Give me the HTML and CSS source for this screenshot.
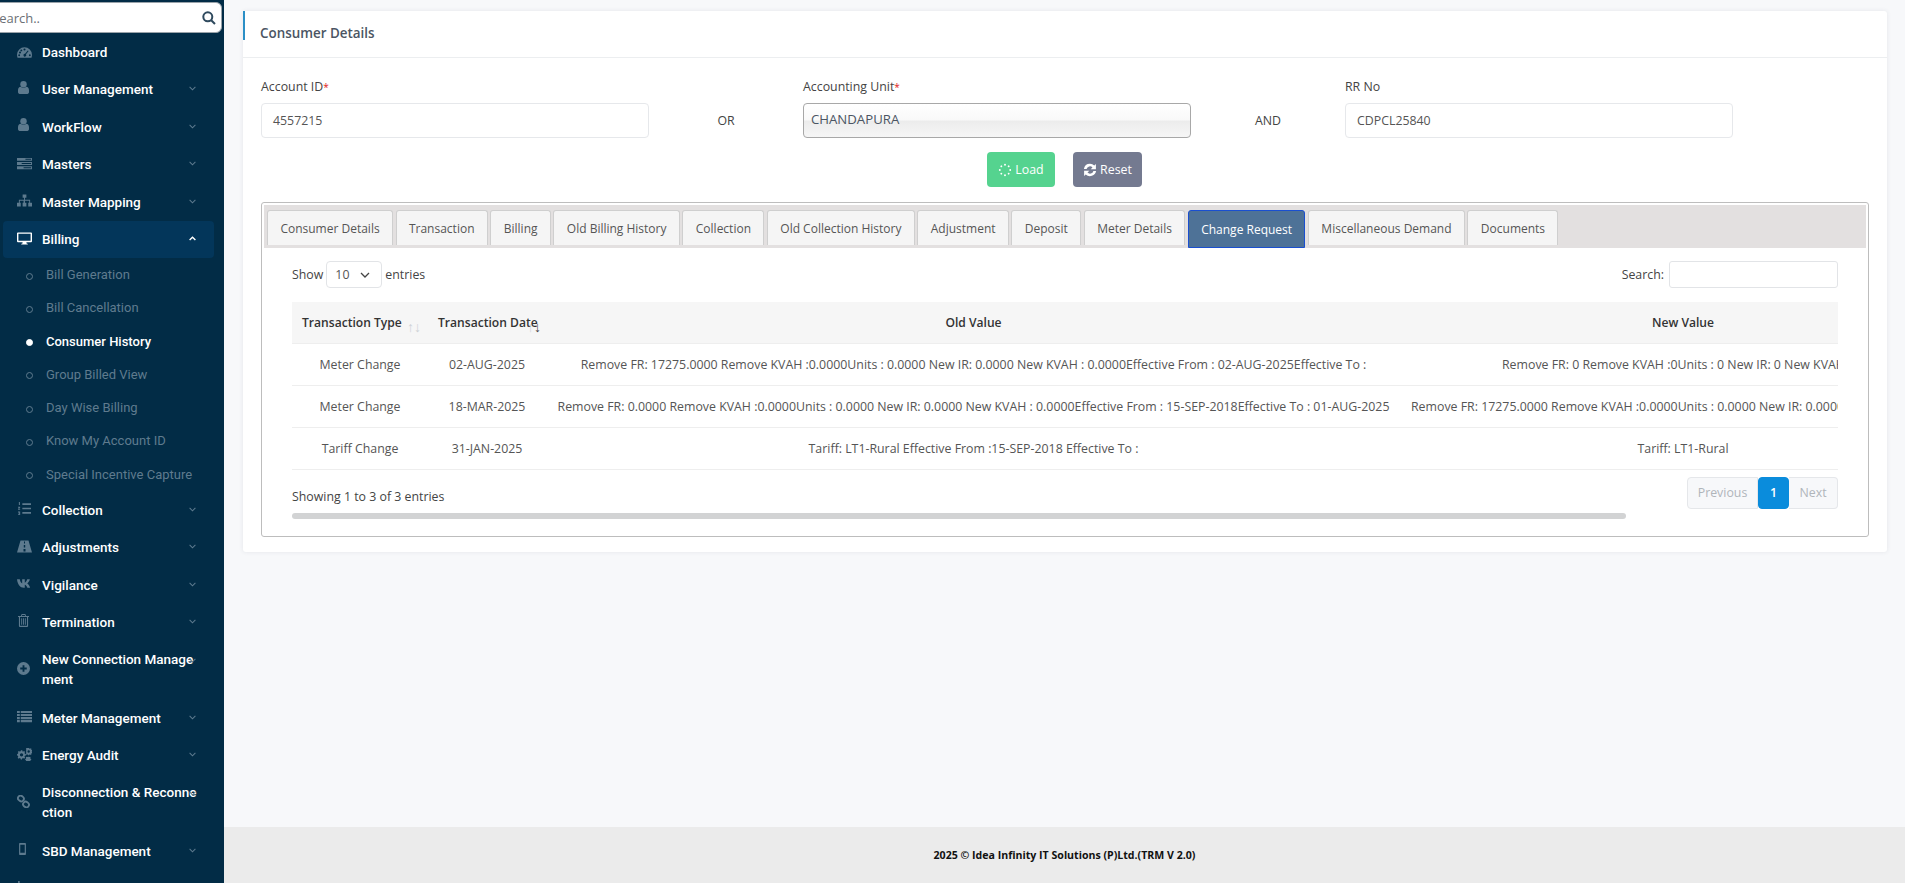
FILE: index.html
```html
<!DOCTYPE html>
<html lang="en">
<head>
<meta charset="utf-8">
<title>Consumer History</title>
<link rel="stylesheet" href="styles.css">
</head>
<body>
<svg class="defs" aria-hidden="true">
  <symbol id="i-gauge" viewBox="0 0 16 12"><path fill-rule="evenodd" d="M0 9a8 8 0 0 1 16 0c0 1.100-.2 2-.6 3H.6C.2 11 0 10.100 0 9zm3.200-3.600a1.100 1.100 0 1 0 0 2.200 1.100 1.100 0 0 0 0-2.200zM8 2.300a1.100 1.100 0 1 0 0 2.200 1.100 1.100 0 0 0 0-2.200zm-3.400 1a1 1 0 1 0 0 2 1 1 0 0 0 0-2zm6.900 1L8.600 7.900a1.500 1.500 0 1 0 1 .6l2.800-3.600zM2.300 8.500a1 1 0 1 0 0 2 1 1 0 0 0 0-2zm11.400 0a1 1 0 1 0 0 2 1 1 0 0 0 0-2z"/></symbol>
  <symbol id="i-user" viewBox="0 0 12 14"><circle cx="6" cy="3.500" r="3.500"/><path d="M0 12.300V10c0-2.300 1.300-3.600 2.800-3.800 1 .8 2 1.100 3.200 1.100s2.200-.3 3.200-1.100C10.700 6.400 12 7.700 12 10v2.300c0 .9-.8 1.700-1.700 1.700H1.700C.8 14 0 13.200 0 12.300z"/></symbol>
  <symbol id="i-server" viewBox="0 0 16 12"><path fill-rule="evenodd" d="M0 0h16v3H0zm9 1v1h6V1zM0 4.500h16v3H0zm5 1v1h10v-1zM0 9h16v3H0zm7 1v1h8v-1z"/></symbol>
  <symbol id="i-sitemap" viewBox="0 0 16 13"><path d="M6 0h4v3.500H8.500V5.700H14v3.300h2v4h-4V9h1V6.700H8.500V9H10v4H6V9h1V6.700H3V9h1v4H0V9h2V5.700h5.500V3.500H6z"/></symbol>
  <symbol id="i-desktop" viewBox="0 0 16 13"><path fill-rule="evenodd" d="M1 0h14c.6 0 1 .4 1 1v8.500c0 .6-.4 1-1 1H10l.4 1.500h1.100v1h-7v-1h1.100l.4-1.500H1c-.6 0-1-.4-1-1V1c0-.6.4-1 1-1zm.5 1.500v7.500h13V1.500z"/></symbol>
  <symbol id="i-listol" viewBox="0 0 15 15"><path d="M5 1.500h10v2H5zM5 6.500h10v2H5zM5 11.500h10v2H5zM1 0h1.200v3.500H1zM0 5.500h2.500v1L1.200 8h1.300v1H0V8l1.300-1.500H0zM0 11h2.500v4H0v-1h1.500v-.5H.7v-1h.8V12H0z"/></symbol>
  <symbol id="i-road" viewBox="0 0 15 12"><path fill-rule="evenodd" d="M3.500 0h8L15 12H0zM7 1v2h1V1zM6.800 4.500v2.500h1.400V4.500zM6.500 8.500V11h2V8.500z"/></symbol>
  <symbol id="i-vk" viewBox="0 0 16 10"><path d="M0 .5h3c.3 2.100 1.400 4 2.500 4.400V.5h2.800v3.700c1-.3 2-1.900 2.600-3.700h2.800c-.5 2.100-1.800 3.700-2.800 4.400 1 .6 2.500 2.100 3.100 4.600h-3c-.6-1.700-1.600-2.900-2.700-3.100v3.100H7.200C3.500 9.500.6 6.300 0 .5z"/></symbol>
  <symbol id="i-trash" viewBox="0 0 12 14"><path fill-rule="evenodd" d="M4 0h4l.8 2H12v1.200h-1V13c0 .6-.4 1-1 1H2c-.6 0-1-.4-1-1V3.200H0V2h3.200zm.2 2h3.600l-.4-.9H4.600zM2.200 3.200v9.600h7.600V3.200zM3.500 4.500h1v7h-1zm2 0h1v7h-1zm2 0h1v7h-1z"/></symbol>
  <symbol id="i-plus" viewBox="0 0 14 14"><path fill-rule="evenodd" d="M7 0a7 7 0 1 1 0 14A7 7 0 0 1 7 0zM6 3.500V6H3.500v2H6v2.500h2V8h2.500V6H8V3.500z"/></symbol>
  <symbol id="i-list" viewBox="0 0 16 12"><path d="M0 0h3v2.200H0zM4 0h12v2.200H4zM0 3.300h3v2.200H0zM4 3.300h12v2.200H4zM0 6.600h3v2.200H0zM4 6.600h12v2.200H4zM0 9.800h3V12H0zM4 9.800h12V12H4z"/></symbol>
  <symbol id="i-cogs" viewBox="0 0 16 14"><path fill-rule="evenodd" d="M5.500 3.500l1.200.4.800-.8 1.200 1.200-.7.900.4 1.100 1.100.2v1.700l-1.100.2-.4 1.100.7.900-1.200 1.200-.9-.7-1.100.4-.2 1.100H4l-.2-1.100-1.100-.4-.9.7L.6 10.400l.7-.9-.4-1.100L0 8.200V6.500l1-.2.400-1.100-.7-.9 1.200-1.200.9.700 1.100-.4.200-1.100h1.700zM4.800 5.600a1.800 1.800 0 1 0 0 3.600 1.800 1.800 0 0 0 0-3.600zM13 0l.3.800.8.1.4-.6 1 .6-.3.700.5.600.8-.1.200 1.100-.8.300v.8l.8.300-.2 1.100-.8-.1-.5.600.3.700-1 .6-.4-.6-.8.100-.3.800h-1.100l-.3-.8-.8-.1-.4.600-.6-.4V0zM12.500 2.500a1.300 1.300 0 1 0 0 2.600 1.300 1.300 0 0 0 0-2.600zM12.500 9.500l.8.300.7-.3.600.8-.4.600.3.800.7.200v1l-.7.200-.3.800.4.600-.6.500-.7-.3-.8.300-.3.400h-.6l-.3-.4-.8-.3-.7.300-.4-.4.400-.7-.3-.8-.7-.2v-1l.7-.2.300-.8-.4-.6.600-.8.700.3z"/></symbol>
  <symbol id="i-link" viewBox="0 0 14 14"><g fill="none" stroke="currentColor" stroke-width="2"><rect x="1" y="1" width="6.500" height="5.500" rx="2.700" transform="rotate(40 4.200 3.700)"/><rect x="6.500" y="7.500" width="6.500" height="5.500" rx="2.700" transform="rotate(40 9.700 10.200)"/></g></symbol>
  <symbol id="i-mobile" viewBox="0 0 8 14"><path fill-rule="evenodd" d="M1.200 0h5.600C7.500 0 8 .5 8 1.200v11.600c0 .7-.5 1.200-1.200 1.200H1.200C.5 14 0 13.500 0 12.800V1.200C0 .5.500 0 1.200 0zm.2 2v9.500h5.200V2z"/></symbol>
  <symbol id="i-chart" viewBox="0 0 14 12"><path d="M1 0h1.500v12H1zM5 4h1.500v8H5zM9 2h1.500v10H9z"/></symbol>
</svg>

<aside class="sidebar">
  <div class="side-search">
    <span class="side-search-text">Search..</span>
    <svg class="side-search-icon" viewBox="0 0 14 14"><circle cx="5.800" cy="5.800" r="4.500"/><path d="M9.200 9.200L13 13"/></svg>
  </div>
  <nav class="menu">
    <a class="item"><svg class="ico ico-gauge"><use href="#i-gauge"/></svg><span class="item-text">Dashboard</span></a>
    <a class="item has-sub"><svg class="ico ico-user"><use href="#i-user"/></svg><span class="item-text">User Management</span><svg class="chev" viewBox="0 0 8 5"><path d="M.7.7L4 4l3.300-3.300"/></svg></a>
    <a class="item has-sub"><svg class="ico ico-user"><use href="#i-user"/></svg><span class="item-text">WorkFlow</span><svg class="chev" viewBox="0 0 8 5"><path d="M.7.7L4 4l3.300-3.300"/></svg></a>
    <a class="item has-sub"><svg class="ico ico-wide"><use href="#i-server"/></svg><span class="item-text">Masters</span><svg class="chev" viewBox="0 0 8 5"><path d="M.7.7L4 4l3.300-3.300"/></svg></a>
    <a class="item has-sub"><svg class="ico ico-wide"><use href="#i-sitemap"/></svg><span class="item-text">Master Mapping</span><svg class="chev" viewBox="0 0 8 5"><path d="M.7.7L4 4l3.300-3.300"/></svg></a>
    <a class="item has-sub open"><svg class="ico ico-wide"><use href="#i-desktop"/></svg><span class="item-text">Billing</span><svg class="chev" viewBox="0 0 8 5"><path d="M.7 4.300L4 1l3.300 3.300"/></svg></a>
    <ul class="submenu">
      <li class="sub">Bill Generation</li>
      <li class="sub">Bill Cancellation</li>
      <li class="sub current">Consumer History</li>
      <li class="sub">Group Billed View</li>
      <li class="sub">Day Wise Billing</li>
      <li class="sub">Know My Account ID</li>
      <li class="sub">Special Incentive Capture</li>
    </ul>
    <a class="item has-sub"><svg class="ico ico-wide"><use href="#i-listol"/></svg><span class="item-text">Collection</span><svg class="chev" viewBox="0 0 8 5"><path d="M.7.7L4 4l3.300-3.300"/></svg></a>
    <a class="item has-sub"><svg class="ico ico-wide"><use href="#i-road"/></svg><span class="item-text">Adjustments</span><svg class="chev" viewBox="0 0 8 5"><path d="M.7.7L4 4l3.300-3.300"/></svg></a>
    <a class="item has-sub"><svg class="ico ico-wide"><use href="#i-vk"/></svg><span class="item-text">Vigilance</span><svg class="chev" viewBox="0 0 8 5"><path d="M.7.7L4 4l3.300-3.300"/></svg></a>
    <a class="item has-sub"><svg class="ico ico-user"><use href="#i-trash"/></svg><span class="item-text">Termination</span><svg class="chev" viewBox="0 0 8 5"><path d="M.7.7L4 4l3.300-3.300"/></svg></a>
    <a class="item has-sub tall"><svg class="ico ico-round"><use href="#i-plus"/></svg><span class="item-text">New Connection Management</span><svg class="chev chev-high" viewBox="0 0 8 5"><path d="M.7.7L4 4l3.300-3.300"/></svg></a>
    <a class="item has-sub"><svg class="ico ico-wide"><use href="#i-list"/></svg><span class="item-text">Meter Management</span><svg class="chev" viewBox="0 0 8 5"><path d="M.7.7L4 4l3.300-3.300"/></svg></a>
    <a class="item has-sub"><svg class="ico ico-wide"><use href="#i-cogs"/></svg><span class="item-text">Energy Audit</span><svg class="chev" viewBox="0 0 8 5"><path d="M.7.7L4 4l3.300-3.300"/></svg></a>
    <a class="item has-sub tall"><svg class="ico ico-round"><use href="#i-link"/></svg><span class="item-text">Disconnection &amp; Reconnection</span><svg class="chev chev-high" viewBox="0 0 8 5"><path d="M.7.7L4 4l3.300-3.300"/></svg></a>
    <a class="item has-sub"><svg class="ico ico-mobile"><use href="#i-mobile"/></svg><span class="item-text">SBD Management</span><svg class="chev" viewBox="0 0 8 5"><path d="M.7.7L4 4l3.300-3.300"/></svg></a>
    <a class="item has-sub"><svg class="ico ico-wide"><use href="#i-chart"/></svg></a>
  </nav>
</aside>

<div class="main">
  <section class="content">
    <div class="card">
      <header class="card-head"><h1 class="card-title">Consumer Details</h1></header>
      <div class="card-body">
        <div class="form-grid">
          <div class="field">
            <label class="label">Account ID<span class="req">*</span></label>
            <div class="input">4557215</div>
          </div>
          <div class="joiner">OR</div>
          <div class="field">
            <label class="label">Accounting Unit<span class="req">*</span></label>
            <div class="select-fake">CHANDAPURA</div>
          </div>
          <div class="joiner">AND</div>
          <div class="field">
            <label class="label">RR No</label>
            <div class="input">CDPCL25840</div>
          </div>
        </div>
        <div class="actions">
          <button class="btn btn-load"><svg class="btn-ico" viewBox="0 0 14 14"><circle cx="7" cy="7" r="5.200" pathLength="16" stroke-dasharray="0.01 1.990"/></svg>Load</button>
          <button class="btn btn-reset"><svg class="btn-ico-fill" viewBox="0 0 14 14"><path d="M7 .8a6.200 6.200 0 0 1 4.300 1.800L12.900 1v5.200H7.700l1.800-1.800A3.500 3.500 0 0 0 3.600 6H.9A6.200 6.200 0 0 1 7 .8zM1.100 7.800h5.200L4.500 9.600a3.500 3.500 0 0 0 5.900-1.600h2.700a6.200 6.200 0 0 1-10.400 3.400L1.100 13z"/></svg>Reset</button>
        </div>

        <div class="tabbox">
          <ul class="tabs">
            <li class="tab">Consumer Details</li>
            <li class="tab">Transaction</li>
            <li class="tab">Billing</li>
            <li class="tab">Old Billing History</li>
            <li class="tab">Collection</li>
            <li class="tab">Old Collection History</li>
            <li class="tab">Adjustment</li>
            <li class="tab">Deposit</li>
            <li class="tab">Meter Details</li>
            <li class="tab active">Change Request</li>
            <li class="tab">Miscellaneous Demand</li>
            <li class="tab">Documents</li>
          </ul>
          <div class="panel">
            <div class="dt-top">
              <div class="dt-length">Show <span class="dt-select">10<svg class="dt-chev" viewBox="0 0 10 6"><path d="M1 1l4 4 4-4"/></svg></span> entries</div>
              <div class="dt-search">Search: <span class="dt-search-input"></span></div>
            </div>
            <div class="dt-wrap">
              <table class="dt">
                <colgroup><col class="c1"><col class="c2"><col class="c3"><col class="c4"></colgroup>
                <thead>
                  <tr>
                    <th class="th-left">Transaction Type<span class="sort sort-a"><b class="up">↑</b><b class="up">↓</b></span></th>
                    <th class="th-left">Transaction Date<span class="sort sort-b"><b class="up">↑</b><b class="down">↓</b></span></th>
                    <th>Old Value</th>
                    <th>New Value</th>
                  </tr>
                </thead>
                <tbody>
                  <tr>
                    <td>Meter Change</td><td>02-AUG-2025</td>
                    <td>Remove FR: 17275.0000 Remove KVAH :0.0000Units : 0.0000 New IR: 0.0000 New KVAH : 0.0000Effective From : 02-AUG-2025Effective To :</td>
                    <td class="new-a">Remove FR: 0 Remove KVAH :0Units : 0 New IR: 0 New KVAH : 0.0000Effective From : 02-AUG-2025Effective To :</td>
                  </tr>
                  <tr>
                    <td>Meter Change</td><td>18-MAR-2025</td>
                    <td>Remove FR: 0.0000 Remove KVAH :0.0000Units : 0.0000 New IR: 0.0000 New KVAH : 0.0000Effective From : 15-SEP-2018Effective To : 01-AUG-2025</td>
                    <td class="new-b">Remove FR: 17275.0000 Remove KVAH :0.0000Units : 0.0000 New IR: 0.0000 New KVAH : 0.0000Effective From : 02-AUG-2025</td>
                  </tr>
                  <tr>
                    <td>Tariff Change</td><td>31-JAN-2025</td>
                    <td>Tariff: LT1-Rural Effective From :15-SEP-2018 Effective To :</td>
                    <td>Tariff: LT1-Rural</td>
                  </tr>
                </tbody>
              </table>
            </div>
            <div class="dt-bottom">
              <div class="dt-info">Showing 1 to 3 of 3 entries</div>
              <div class="pager">
                <span class="page page-prev">Previous</span><span class="page page-on">1</span><span class="page page-next">Next</span>
              </div>
            </div>
            <div class="hscroll"><div class="hscroll-thumb"></div></div>
          </div>
        </div>
      </div>
    </div>
  </section>
  <footer class="footer">2025 © Idea Infinity IT Solutions (P)Ltd.(TRM V 2.0)</footer>
</div>
</body>
</html>
```
FILE: styles.css
```css
* { box-sizing: border-box; }
html, body { height: 100%; margin: 0; overflow: hidden; }
body {
  display: flex;
  font-family: "Open Sans", "Noto Sans", sans-serif;
  font-size: 12.35px;
  color: #4a4a4a;
  background: #f7f8fa;
}
.defs { position: absolute; width: 0; height: 0; }

/* sidebar */
.sidebar {
  flex: 0 0 224px;
  height: 100vh;
  overflow: hidden;
  background: #022c46;
  padding-top: 2px;
  font-family: Roboto, sans-serif;
}
.side-search {
  display: flex;
  align-items: center;
  justify-content: space-between;
  height: 31px;
  width: 232px;
  margin-left: -10px;
  padding: 0 5px 0 1px;
  background: #fff;
  border: 1px solid #9aa3aa;
  border-radius: 6px;
  font-family: "Open Sans", sans-serif;
  font-size: 13px;
  color: #6b7075;
}
.side-search-icon { width: 14px; height: 14px; fill: none; stroke: #2f4a5e; stroke-width: 2; }
.menu { display: block; }
.item {
  position: relative;
  display: flex;
  align-items: center;
  height: 37.5px;
  margin: 0 10px 0 3px;
  padding: 0 0 0 14px;
  border-radius: 4px;
  color: #fff;
  font-size: 13.5px;
  font-weight: 500;
  line-height: 20px;
}
.item.tall { height: 58px; padding-bottom: 3px; }
.item.open { background: #03365a; }
.item-text { width: 156px; word-break: break-all; }
.ico { flex: none; display: block; fill: #5d7a8e; color: #5d7a8e; margin-right: 10px; }
.ico-wide { width: 15px; height: 13px; margin-top: -2px; }
.ico-gauge { width: 15px; height: 12px; }
.ico-user { width: 11px; height: 13px; margin: -4px 13px 0 1px; }
.ico-round { width: 13px; height: 13px; margin: 0 12px 0 0; }
.ico-mobile { width: 7px; height: 12px; margin: -4px 16px 0 2px; }
.open .ico { fill: #fff; }
.chev {
  position: absolute;
  left: 186px;
  top: 50%;
  width: 7px;
  height: 5px;
  margin-top: -3px;
  fill: none;
  stroke: #5d7a8e;
  stroke-width: 1.2;
}
.chev-high { top: 17px; margin-top: 0; }
.open .chev { stroke: #fff; stroke-width: 1.6; }
.submenu { list-style: none; margin: 0; padding: 0; }
.sub {
  position: relative;
  height: 33.3px;
  line-height: 34px;
  padding-left: 46px;
  font-size: 13px;
  color: #5f7b8e;
}
.sub::before {
  content: "";
  position: absolute;
  left: 26px;
  top: 14.500px;
  width: 5px;
  height: 5px;
  border: 1px solid #5f7b8e;
  border-radius: 50%;
}
.sub.current { color: #fff; font-weight: 500; }
.sub.current::before { background: #fff; border-color: #fff; }

/* main */
.main { flex: 1; min-width: 0; display: flex; flex-direction: column; height: 100vh; }
.content { flex: 1; padding: 11px 18px 0 19px; }
.footer {
  flex: 0 0 56px;
  display: flex;
  align-items: center;
  justify-content: center;
  background: #ebebeb;
  color: #111;
  font-size: 10.6px;
  font-weight: 700;
}
.card {
  background: #fff;
  border-radius: 3px;
  box-shadow: 0 0 4px rgba(60, 70, 90, .10);
}
.card-head {
  position: relative;
  height: 47px;
  padding-left: 17px;
  display: flex;
  align-items: center;
  border-bottom: 1px solid #eceef0;
}
.card-head::before {
  content: "";
  position: absolute;
  left: 0;
  top: 0;
  width: 2px;
  height: 29px;
  background: #2b8fc6;
}
.card-title { margin: -3px 0 0; font-size: 13.4px; font-weight: 600; color: #4b5563; }
.card-body { padding: 20px 18px 15px 18px; }
.form-grid { display: grid; grid-template-columns: 388px 154px 388px 154px 388px; }
.label { display: block; height: 18px; line-height: 18px; margin-bottom: 7px; color: #444; }
.req { color: #e02020; font-size: 10px; }
.input {
  height: 35px;
  line-height: 34px;
  padding: 0 11px;
  border: 1px solid #e6e8eb;
  border-radius: 4px;
  color: #555;
}
.select-fake {
  height: 35px;
  line-height: 31px;
  padding: 0 7px;
  border: 1px solid #a8a8a8;
  border-radius: 4px;
  background: linear-gradient(#fff 0%, #f9f9f9 48%, #ececec 52%, #f6f6f6 100%);
  color: #4b5563;
  font-size: 13.2px;
}
.joiner { display: flex; align-items: center; justify-content: center; padding-top: 25px; color: #444; }
.actions { display: flex; justify-content: center; gap: 18px; margin-top: 14px; padding-right: 1px; }
.btn {
  display: flex;
  align-items: center;
  justify-content: center;
  gap: 3px;
  height: 35px;
  border: 0;
  border-radius: 4px;
  color: #fff;
  font: inherit;
}
.btn-load { width: 68px; background: #55d38f; }
.btn-reset { width: 69px; background: #747a90; }
.btn-ico { width: 14px; height: 14px; fill: none; stroke: #fff; stroke-width: 1.900; stroke-linecap: round; }
.btn-ico-fill { width: 14px; height: 14px; fill: #fff; }

.tabbox {
  margin-top: 15px;
  padding: 2px;
  border: 1px solid #bdbdbd;
  border-radius: 3px;
}
.tabs {
  list-style: none;
  display: flex;
  gap: 2.500px;
  height: 43px;
  margin: 0;
  padding: 5px 4px 3px 3px;
  background: #e3e0e0;
  font-size: 12px;
}
.tab {
  display: flex;
  align-items: center;
  justify-content: center;
  height: 35px;
  padding: 0 12.4px;
  background: #f5f5f5;
  border: 1px solid #cfcfcf;
  border-bottom: 0;
  border-radius: 3px 3px 0 0;
  white-space: nowrap;
  color: #555;
}
.tab.active {
  height: 38px;
  background: #4e7297;
  border: 1px solid #1a4fd0;
  color: #fff;
}
.panel { padding: 13px 28px 15px; }
.dt-top { display: flex; justify-content: space-between; align-items: center; height: 27px; color: #444; }
.dt-length, .dt-search { display: flex; align-items: center; gap: 3px; }
.dt-select {
  display: flex;
  align-items: center;
  justify-content: space-between;
  width: 56px;
  height: 27px;
  padding: 0 11px 0 8px;
  border: 1px solid #e2e4e7;
  border-radius: 4px;
  color: #555;
}
.dt-chev { width: 10px; height: 6px; fill: none; stroke: #444; stroke-width: 1.300; }
.dt-search-input { width: 169px; height: 27px; border: 1px solid #e2e4e7; border-radius: 3px; margin-left: 2px; }
.dt-wrap { margin-top: 14px; overflow: hidden; }
.dt { border-collapse: collapse; table-layout: fixed; width: 1673px; }
.c1 { width: 136px; }
.c2 { width: 118px; }
.c3 { width: 855px; }
.c4 { width: 564px; }
.dt th {
  position: relative;
  height: 41px;
  background: #f6f6f6;
  border-bottom: 1px solid #eeeeee;
  font-size: 12.1px;
  font-weight: 600;
  color: #333;
  white-space: nowrap;
  text-align: center;
}
.dt th.th-left { text-align: left; padding-left: 10px; }
.dt td {
  height: 42px;
  padding: 0 10px;
  border-bottom: 1px solid #eeeeee;
  text-align: center;
  white-space: nowrap;
  color: #555;
}
.dt td.new-a { text-align: left; padding-left: 101px; }
.dt td.new-b { text-align: left; }
.sort { position: absolute; top: 18px; font-size: 14px; line-height: 14px; display: flex; }
.sort b { font-weight: 400; }
.sort-a { left: 115px; }
.sort-b { left: 99px; }
.up { color: #cfd3d7; }
.down { color: #444; }
.dt-bottom { display: flex; justify-content: space-between; align-items: center; margin-top: 7px; height: 32px; color: #444; }
.dt-info { padding-top: 7px; }
.pager { display: flex; height: 32px; }
.page { display: flex; align-items: center; justify-content: center; border: 1px solid #e5e7ea; background: #f7f8fa; color: #b0b5ba; }
.page-prev { width: 71px; border-radius: 4px 0 0 4px; }
.page-on { width: 31px; background: #0a8cdc; border-color: #0a8cdc; border-radius: 4px; color: #fff; font-weight: 600; }
.page-next { width: 49px; border-left: 0; border-radius: 0 4px 4px 0; }
.hscroll { margin-top: 4px; height: 6px; }
.hscroll-thumb { width: 86.300%; height: 6px; background: #d2d3d4; border-radius: 3px; }
```
